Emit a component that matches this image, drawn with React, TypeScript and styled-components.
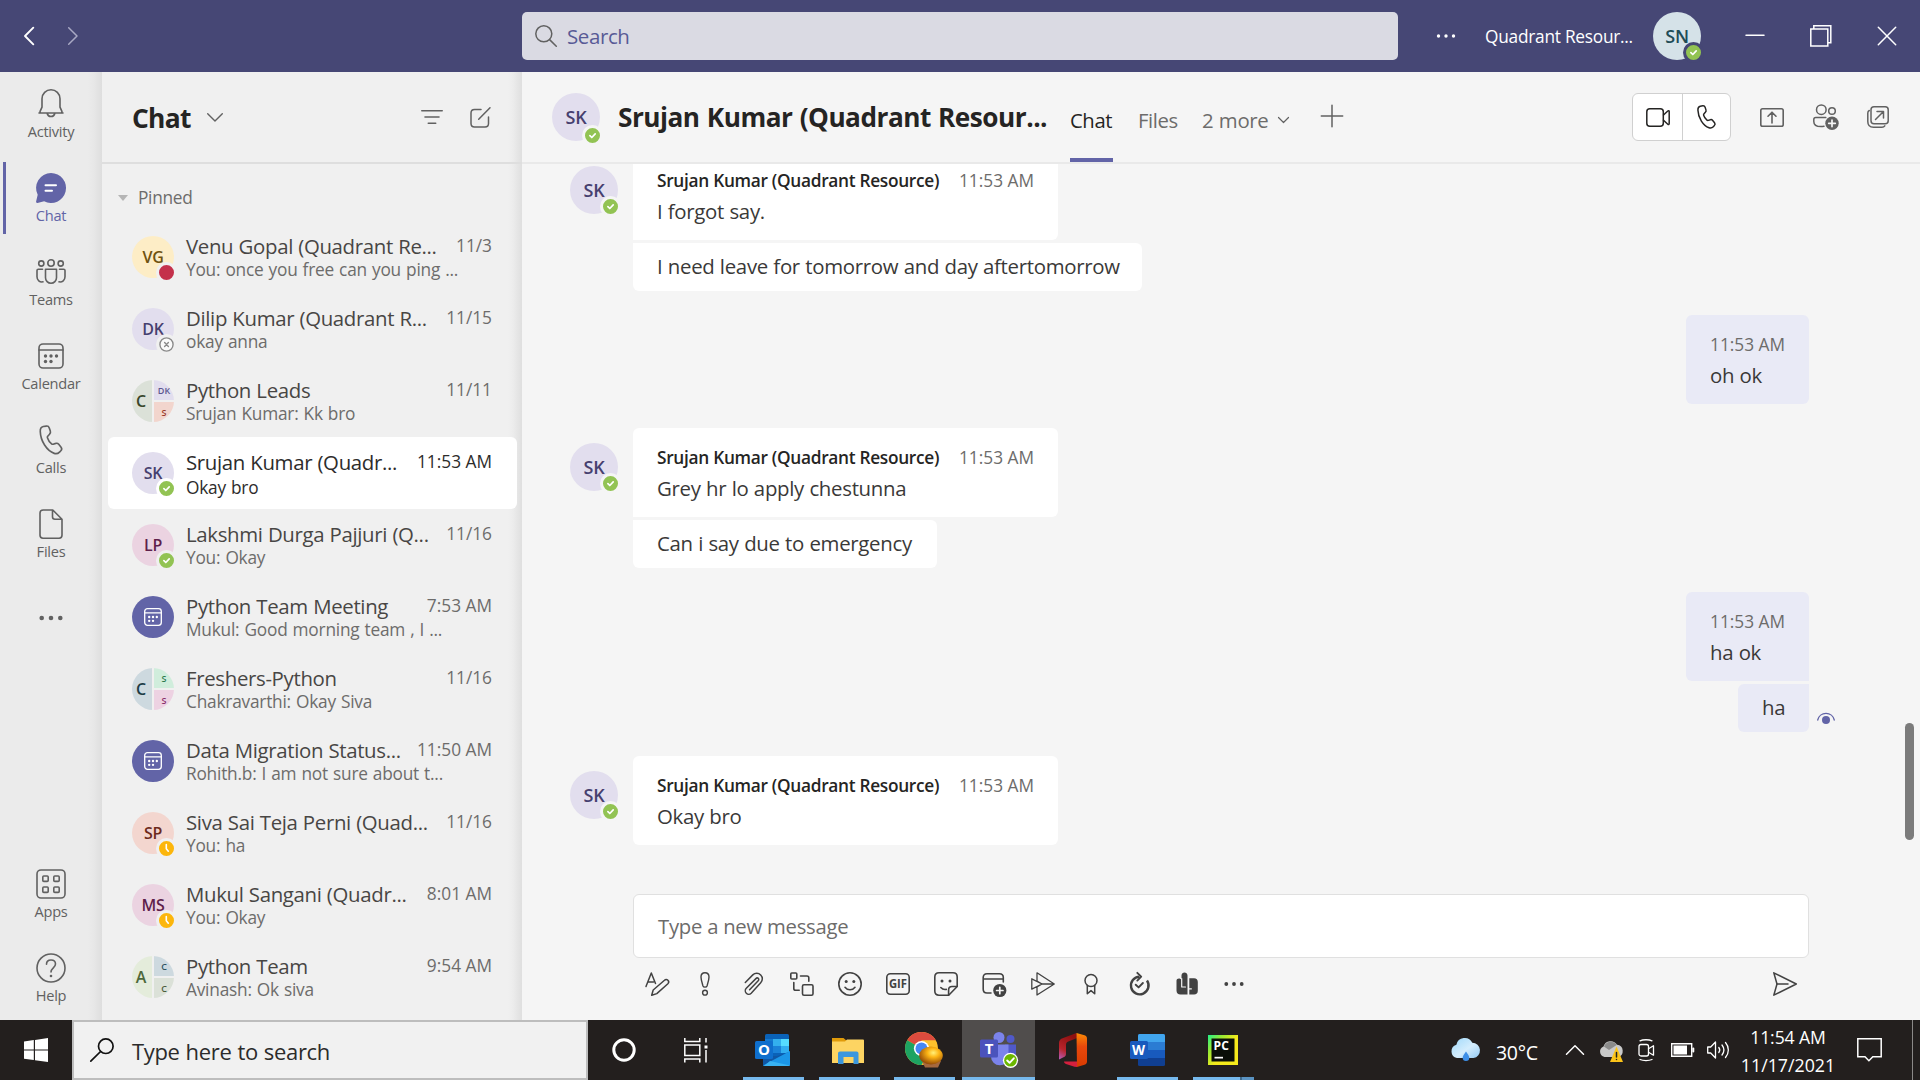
import React from "react";
import styled, { createGlobalStyle, css } from "styled-components";

const GlobalStyle = createGlobalStyle`
  *, *::before, *::after { box-sizing: border-box; }
  html, body { margin: 0; padding: 0; overflow: hidden; }
  body { font-family: "Open Sans", "Noto Sans", sans-serif; color: #252423; }
  svg { display: block; flex: none; overflow: visible; }
`;

const Screen = styled.div`
  width: 1920px;
  height: 1080px;
  display: grid;
  grid-template-rows: 72px 948px 60px;
  overflow: hidden;
`;

/* ---------- shared ---------- */

const Svg = styled.svg<{ $color?: string; $stroke?: number }>`
  fill: none;
  stroke: ${(p) => p.$color ?? "#616161"};
  stroke-width: ${(p) => p.$stroke ?? 1.6};
  stroke-linecap: round;
  stroke-linejoin: round;
`;

type IconProps = { w: number; h: number; color?: string; stroke?: number; children: React.ReactNode };
const Icon = ({ w, h, color, stroke, children }: IconProps) => (
  <Svg width={w} height={h} viewBox={`0 0 ${w} ${h}`} $color={color} $stroke={stroke}>
    {children}
  </Svg>
);

const Label = styled.span<{
  $size: number;
  $color?: string;
  $weight?: number;
  $track?: number;
  $word?: number;
  $line?: number;
}>`
  font-size: ${(p) => p.$size}px;
  line-height: ${(p) => p.$line ?? 26}px;
  color: ${(p) => p.$color ?? "#252423"};
  font-weight: ${(p) => p.$weight ?? 400};
  letter-spacing: ${(p) => p.$track ?? -0.4}px;
  word-spacing: ${(p) => p.$word ?? 0}px;
  white-space: pre;
`;

const AvatarDisc = styled.div<{ $size: number; $bg: string; $fg: string }>`
  position: relative;
  flex: none;
  width: ${(p) => p.$size}px;
  height: ${(p) => p.$size}px;
  border-radius: 50%;
  background: ${(p) => p.$bg};
  color: ${(p) => p.$fg};
  display: flex;
  align-items: center;
  justify-content: center;
  font-weight: 600;
  letter-spacing: -0.2px;
  font-size: ${(p) => (p.$size > 44 ? 18 : 16)}px;
`;

const BadgeDot = styled.span<{ $ring: string; $fill: string; $drop: number }>`
  position: absolute;
  right: -3px;
  bottom: ${(p) => -3 - p.$drop}px;
  width: 21px;
  height: 21px;
  border-radius: 50%;
  border: 3px solid ${(p) => p.$ring};
  background: ${(p) => p.$fill};
`;

type Status = "online" | "busy" | "offline" | "away";
const statusFill: Record<Status, string> = {
  online: "#92c353",
  busy: "#c4314b",
  offline: "#fafafa",
  away: "#fcb60c",
};

const Badge = ({ status, ring, drop = 0 }: { status: Status; ring: string; drop?: number }) => (
  <BadgeDot $ring={ring} $fill={statusFill[status]} $drop={drop}>
    {status === "online" && (
      <Icon w={15} h={15} color="#fff" stroke={1.7}>
        <path d="M4.9 7.7l1.9 1.8 3.4-3.6" />
      </Icon>
    )}
    {status === "offline" && (
      <Icon w={15} h={15} color="#8a8a8a" stroke={1.4}>
        <circle cx="7.5" cy="7.5" r="6.6" />
        <path d="M5.6 5.6l3.8 3.8M9.4 5.6L5.6 9.4" />
      </Icon>
    )}
    {status === "away" && (
      <Icon w={15} h={15} color="#fff" stroke={1.6}>
        <path d="M7.3 3.6v4.2l2 2.4" />
      </Icon>
    )}
  </BadgeDot>
);

/* ---------- title bar ---------- */

const TitleBar = styled.header`
  background: #464775;
  display: flex;
  align-items: center;
`;
const NavArrows = styled.div`
  width: 522px;
  padding-left: 24px;
  display: flex;
  gap: 34px;
`;
const SearchField = styled.div`
  width: 876px;
  height: 48px;
  border-radius: 5px;
  background: #dadae3;
  display: flex;
  align-items: center;
  padding: 0 0 1px 13px;
  gap: 10px;
`;
const TitleRight = styled.div`
  flex: 1;
  display: flex;
  align-items: center;
  padding-left: 38px;
`;
const OrgName = styled.div`
  margin-left: 29px;
  width: 168px;
  padding-top: 2px;
`;
const WindowButtons = styled.div`
  display: flex;
  align-items: center;
  gap: 46px;
  margin-left: 45px;
`;

/* ---------- app body ---------- */

const Body = styled.div`
  display: grid;
  grid-template-columns: 102px 420px 1398px;
  min-height: 0;
`;

const Rail = styled.nav`
  background: linear-gradient(to right, #ebebeb 88px, #e7e7e7 94px, #dedede 102px);
  display: flex;
  flex-direction: column;
`;
const RailItem = styled.div<{ $active?: boolean }>`
  height: 84px;
  display: flex;
  flex-direction: column;
  align-items: center;
  padding-top: 16px;
  ${(p) =>
    p.$active &&
    css`
      background: linear-gradient(#6264a7, #6264a7) 3px 6px / 3px 72px no-repeat;
    `}
`;
const RailMore = styled(RailItem)`
  padding-top: 0;
  justify-content: center;
`;
const RailIcon = styled.div`
  height: 32px;
  display: flex;
  align-items: center;
`;
const RailSpacer = styled.div`
  flex: 1;
`;

const ListPanel = styled.aside`
  background: linear-gradient(to right, #f0f0f0 406px, #ececec 411px, #dfdfdf 420px);
  min-width: 0;
`;
const ListHeader = styled.div`
  height: 92px;
  border-bottom: 2px solid #dedede;
  display: flex;
  align-items: center;
  padding: 0 31px 0 30px;
`;
const ListTitle = styled.div`
  padding-top: 2px;
`;
const HeaderIcons = styled.div`
  margin-left: auto;
  display: flex;
  align-items: center;
  gap: 27px;
`;
const SectionTitle = styled.div`
  height: 57px;
  display: flex;
  align-items: center;
  gap: 10px;
  padding: 11px 0 0 16px;
`;
const ChatRow = styled.div<{ $selected?: boolean }>`
  height: 72px;
  margin: 0 5px 0 6px;
  padding: 0 25px 0 24px;
  border-radius: 6px;
  display: grid;
  grid-template-columns: 42px 1fr;
  column-gap: 12px;
  align-items: start;
  background: ${(p) => (p.$selected ? "#fff" : "transparent")};
  & > :first-child { margin-top: 15px; }
`;
const RowText = styled.div<{ $selected?: boolean }>`
  display: flex;
  flex-direction: column;
  padding-top: 13px;
  gap: ${(p) => (p.$selected ? 2 : 0)}px;
`;
const RowTop = styled.div`
  display: flex;
  justify-content: space-between;
  height: 25px;
`;

const Pie = styled.div`
  width: 42px;
  height: 42px;
  border-radius: 50%;
  overflow: hidden;
  display: grid;
  grid-template-columns: 20px 20px;
  grid-template-rows: 20px 20px;
  gap: 2px;
`;
const Slice = styled.div<{ $bg: string; $fg: string; $big?: boolean }>`
  grid-row: ${(p) => (p.$big ? "1 / 3" : "auto")};
  background: ${(p) => p.$bg};
  color: ${(p) => p.$fg};
  display: flex;
  align-items: center;
  justify-content: center;
  font-weight: 600;
  padding-right: ${(p) => (p.$big ? 2 : 0)}px;
  font-size: ${(p) => (p.$big ? 16 : 9)}px;
`;

/* ---------- conversation ---------- */

const Main = styled.main`
  background: #f5f5f5;
  display: flex;
  flex-direction: column;
  min-width: 0;
`;
const MainHeader = styled.div`
  height: 92px;
  flex: none;
  border-bottom: 2px solid #e9e9e9;
  display: flex;
  align-items: center;
  padding: 0 31px 0 30px;
`;
const PersonTitle = styled.div`
  width: 452px;
  margin-left: 18px;
`;
const Tabs = styled.div`
  align-self: stretch;
  display: flex;
`;
const Tab = styled.div<{ $active?: boolean; $width: number }>`
  width: ${(p) => p.$width}px;
  margin-right: 25px;
  padding-top: 35px;
  display: flex;
  white-space: nowrap;
  border-bottom: 4px solid ${(p) => (p.$active ? "#6264a7" : "transparent")};
`;
const TabChevron = styled.div`
  padding: 10px 0 0 10px;
`;
const AddTab = styled.div`
  padding-top: 33px;
`;
const CallGroup = styled.div`
  margin-left: auto;
  width: 99px;
  height: 48px;
  border: 1px solid #d0d0d0;
  border-radius: 6px;
  background: #fff;
  display: grid;
  grid-template-columns: 50px 47px;
  & > * { display: flex; align-items: center; justify-content: center; }
  & > :first-child { border-right: 1px solid #d0d0d0; }
`;
const MainTools = styled.div`
  display: flex;
  align-items: center;
  gap: 28.5px;
  margin-left: 29px;
`;

const MessageArea = styled.div`
  height: 730px;
  flex: none;
  overflow: hidden;
  display: grid;
  grid-template-columns: 1fr 15px;
`;
const MessageList = styled.div`
  display: flex;
  flex-direction: column;
  justify-content: flex-end;
  gap: 24px;
  padding: 0 71px 49px 48px;
  height: 730px;
`;
const Scrollbar = styled.div`
  margin-top: 559px;
  width: 9px;
  height: 117px;
  border-radius: 5px;
  background: #7b7b7b;
`;
const TheirGroup = styled.div`
  display: flex;
  gap: 15px;
  & > :first-child { margin-top: 15px; }
`;
const MyGroup = styled.div`
  display: flex;
  justify-content: flex-end;
  align-items: flex-end;
  margin-right: 25px;
  gap: 8px;
`;
const Stack = styled.div<{ $mine?: boolean }>`
  display: flex;
  flex-direction: column;
  gap: 3px;
  align-items: ${(p) => (p.$mine ? "flex-end" : "flex-start")};
  & > * { border-radius: 6px; }
  & > :not(:last-child) {
    ${(p) => (p.$mine ? "border-bottom-right-radius: 0;" : "border-bottom-left-radius: 0;")}
  }
  & > :not(:first-child) {
    ${(p) => (p.$mine ? "border-top-right-radius: 0;" : "border-top-left-radius: 0;")}
  }
`;
const Bubble = styled.div<{ $mine?: boolean; $width: number; $short?: boolean }>`
  width: ${(p) => p.$width}px;
  height: ${(p) => (p.$short ? 48 : 89)}px;
  padding: ${(p) => (p.$short ? "10px 24px 0" : "17px 24px 0")};
  background: ${(p) => (p.$mine ? "#e9eaf6" : "#fff")};
  display: flex;
  flex-direction: column;
  gap: 4px;
`;
const Meta = styled.div`
  display: flex;
  justify-content: space-between;
`;
const Seen = styled.div`
  width: 18px;
  margin: 0 -26px 8px 0;
`;

const Compose = styled.div`
  margin: 0 111px 0 111px;
  height: 64px;
  border: 1px solid #e0e0e0;
  border-radius: 6px;
  background: #fff;
  display: flex;
  align-items: center;
  padding-left: 24px;
`;
const ComposeTools = styled.div`
  display: flex;
  margin: 2px 111px 0 111px;
  height: 48px;
`;
const ToolCell = styled.div`
  width: 48.2px;
  height: 48px;
  display: flex;
  align-items: center;
  justify-content: center;
  &:nth-last-child(2) { padding-right: 3px; }
  &:last-child { margin-left: auto; }
`;

/* ---------- taskbar ---------- */

const Taskbar = styled.footer`
  background: #231f1e;
  display: flex;
`;
const StartCell = styled.div`
  width: 72px;
  display: flex;
  align-items: center;
  justify-content: center;
`;
const TaskSearch = styled.div`
  width: 516px;
  border: 2px solid #bdbdbd;
  background: #f1f1f1;
  display: flex;
  align-items: center;
  gap: 18px;
  padding-left: 16px;
`;
const SearchPrompt = styled.div`
  padding-top: 2px;
`;
const TaskCell = styled.div<{ $width: number; $line?: boolean; $active?: boolean; $inset?: number }>`
  width: ${(p) => p.$width}px;
  padding-right: ${(p) => p.$inset ?? 0}px;
  display: flex;
  align-items: center;
  justify-content: center;
  background-color: ${(p) => (p.$active ? "#504d4c" : "transparent")};
  ${(p) =>
    p.$line &&
    css`
      background-image: linear-gradient(#76b9ed, #76b9ed);
      background-size: ${p.$active ? "100%" : "61px"} 3px;
      background-position: center bottom;
      background-repeat: no-repeat;
    `}
`;
const StackedCell = styled(TaskCell)`
  background-image: linear-gradient(to right, #76b9ed 47px, #3f6a8d 47px, #3f6a8d 49px, #5a93c2 49px);
  background-size: 61px 3px;
  background-position: 8px bottom;
  background-repeat: no-repeat;
`;
const Tray = styled.div`
  margin-left: auto;
  display: flex;
  align-items: center;
`;
const TraySlot = styled.div<{ $gap: number }>`
  margin-left: ${(p) => p.$gap}px;
`;
const Temp = styled.div`
  width: 44px;
  margin-left: 15px;
  padding-top: 5px;
`;
const Clock = styled.div`
  margin-left: 9px;
  width: 98px;
  display: flex;
  flex-direction: column;
  align-items: center;
  padding-top: 1px;
`;
const PeekLine = styled.div`
  width: 1px;
  height: 60px;
  background: #8b8988;
  margin: 0 7px 0 30px;
`;

/* ---------- drawings ---------- */

const Phone = ({ w, h, color, stroke }: { w: number; h: number; color: string; stroke: number }) => (
  <Svg width={w} height={h} viewBox="0 0 24 31" $color={color} $stroke={stroke}>
    <path d="M4 1.6L7.2 1.1c1.5-.2 2.5.5 3 1.9l1.1 3.3c.4 1.2.1 2.3-.8 3.2L8.6 11.6c-.4.5-.5 1-.3 1.6.8 2.6 2.3 4.7 4.3 6.3.5.4 1.1.5 1.7.3l2.6-.8c1.2-.4 2.3 0 3.1 1l2.4 3c.9 1.2.9 2.5-.2 3.6l-1.4 1.4c-1.500 1.500-3.500 2-5.500 1.300C7.700 26.700 1.200 16.600.9 6.600.8 4.100 1.800 2.100 4 1.600z" />
  </Svg>
);

const CalendarGlyph = ({ size, color, stroke }: { size: number; color: string; stroke: number }) => (
  <Svg width={size} height={size} viewBox="0 0 26 26" $color={color} $stroke={stroke}>
    <rect x="1" y="1" width="24" height="24" rx="4" />
    <path d="M1 7h24" />
    <g fill={color} stroke="none">
      <circle cx="7.5" cy="13" r="1.7" /><circle cx="13" cy="13" r="1.7" /><circle cx="18.5" cy="13" r="1.7" />
      <circle cx="7.5" cy="18.5" r="1.7" /><circle cx="13" cy="18.5" r="1.7" />
    </g>
  </Svg>
);

const Dots = ({ w, color, r, step }: { w: number; color: string; r: number; step: number }) => (
  <Icon w={w} h={8} color="none">
    <g fill={color} stroke="none">
      <circle cx={w / 2 - step} cy="4" r={r} /><circle cx={w / 2} cy="4" r={r} /><circle cx={w / 2 + step} cy="4" r={r} />
    </g>
  </Icon>
);

const railTop = [
  {
    label: "Activity",
    icon: (
      <Icon w={26} h={30}>
        <path d="M1 24h24M2.8 24c-.8-.3-1-1-.6-1.9L4 18.2V9.8a9 9 0 0 1 18 0v8.4l1.8 3.9c.4.9.2 1.6-.6 1.9M9.200 24.500a3.900 3.900 0 0 0 7.600 0" />
      </Icon>
    ),
  },
  {
    label: "Chat",
    active: true,
    icon: (
      <Icon w={30} h={30} color="none">
        <path fill="#6264a7" d="M15 0a15 15 0 1 1-6.900 28.300L1.500 30c-.9.200-1.600-.5-1.400-1.400l1.600-6.800A15 15 0 0 1 15 0z" />
        <path stroke="#fff" strokeWidth="2" d="M9.500 12.200h10.500M9.500 17.800h6.500" />
      </Icon>
    ),
  },
  {
    label: "Teams",
    icon: (
      <Icon w={30} h={26}>
        <circle cx="15" cy="4" r="3.2" /><circle cx="5.3" cy="4.5" r="2.6" /><circle cx="24.7" cy="4.5" r="2.6" />
        <path d="M9.500 10.200h11v8.600a5.500 5.500 0 0 1-11 0zM6.500 10.200H2.300c-.8 0-1.300.5-1.300 1.300v6.300c0 3.300 2.700 5.700 6 5M23.500 10.200h4.200c.8 0 1.300.5 1.300 1.300v6.300c0 3.300-2.700 5.700-6 5" />
      </Icon>
    ),
  },
  { label: "Calendar", icon: <CalendarGlyph size={26} color="#616161" stroke={1.6} /> },
  { label: "Calls", icon: <Phone w={24} h={30} color="#616161" stroke={1.7} /> },
  {
    label: "Files",
    icon: (
      <Icon w={24} h={30}>
        <path d="M4.200 1h9.600L23 10.200v16.100c0 1.900-1 2.900-2.900 2.900H4c-1.900 0-3-1-3-2.900V4C1 2 2.200 1 4.200 1zM13.500 1.200v6.600c0 1.600.8 2.500 2.500 2.500h6.800" />
      </Icon>
    ),
  },
];

const railBottom = [
  {
    label: "Apps",
    icon: (
      <Icon w={30} h={30}>
        <rect x="1" y="1" width="28" height="28" rx="4" />
        <rect x="6.8" y="7" width="5.4" height="5.4" rx="1" /><rect x="17.8" y="7" width="5.4" height="5.4" rx="1" />
        <rect x="6.8" y="18" width="5.4" height="5.4" rx="1" /><rect x="17.8" y="18" width="5.4" height="5.4" rx="1" />
      </Icon>
    ),
  },
  {
    label: "Help",
    icon: (
      <Icon w={30} h={30}>
        <circle cx="15" cy="15" r="14" />
        <path d="M10.500 11.300c0-2.600 1.900-4.300 4.500-4.300s4.500 1.700 4.500 4.100c0 3.600-4.500 3.900-4.500 7.900" />
        <circle cx="15" cy="23" r="1.3" fill="#616161" stroke="none" />
      </Icon>
    ),
  },
];

type Chat = {
  name: string;
  time: string;
  preview: string;
  selected?: boolean;
  person?: { initials: string; bg: string; fg: string; status: Status };
  pie?: { t: string; bg: string; fg: string }[];
};

const chats: Chat[] = [
  { name: "Venu Gopal (Quadrant Re...", time: "11/3", preview: "You: once you free can you ping ...", person: { initials: "VG", bg: "#fdedc6", fg: "#6f5210", status: "busy" } },
  { name: "Dilip Kumar (Quadrant R...", time: "11/15", preview: "okay anna", person: { initials: "DK", bg: "#e2deee", fg: "#46406f", status: "offline" } },
  { name: "Python Leads", time: "11/11", preview: "Srujan Kumar: Kk bro", pie: [{ t: "C", bg: "#dbe1d8", fg: "#39472c" }, { t: "DK", bg: "#e2deee", fg: "#5d5690" }, { t: "S", bg: "#f2d5cd", fg: "#9a3a2a" }] },
  { name: "Srujan Kumar (Quadr...", time: "11:53 AM", preview: "Okay bro", selected: true, person: { initials: "SK", bg: "#e2deee", fg: "#46406f", status: "online" } },
  { name: "Lakshmi Durga Pajjuri (Q...", time: "11/16", preview: "You: Okay", person: { initials: "LP", bg: "#ebd3e1", fg: "#5f1f4b", status: "online" } },
  { name: "Python Team Meeting", time: "7:53 AM", preview: "Mukul: Good morning team , I ..." },
  { name: "Freshers-Python", time: "11/16", preview: "Chakravarthi: Okay Siva", pie: [{ t: "C", bg: "#cdd9df", fg: "#1d3c46" }, { t: "S", bg: "#d0eddc", fg: "#2c7a4e" }, { t: "S", bg: "#edd2e2", fg: "#8a2f6c" }] },
  { name: "Data Migration Status...", time: "11:50 AM", preview: "Rohith.b: I am not sure about t..." },
  { name: "Siva Sai Teja Perni (Quad...", time: "11/16", preview: "You: ha", person: { initials: "SP", bg: "#f3d6cf", fg: "#6d2a1c", status: "away" } },
  { name: "Mukul Sangani (Quadr...", time: "8:01 AM", preview: "You: Okay", person: { initials: "MS", bg: "#ebd3e1", fg: "#5f1f4b", status: "away" } },
  { name: "Python Team", time: "9:54 AM", preview: "Avinash: Ok siva", pie: [{ t: "A", bg: "#e4ecdb", fg: "#4d683a" }, { t: "C", bg: "#cdd9df", fg: "#2f5361" }, { t: "C", bg: "#dbe1d8", fg: "#4b5c3c" }] },
];

const ChatAvatar = ({ chat }: { chat: Chat }) => {
  if (chat.pie) {
    return (
      <Pie>
        {chat.pie.map((s, i) => (
          <Slice key={i} $bg={s.bg} $fg={s.fg} $big={i === 0}>{s.t}</Slice>
        ))}
      </Pie>
    );
  }
  if (chat.person) {
    const p = chat.person;
    return (
      <AvatarDisc $size={42} $bg={p.bg} $fg={p.fg}>
        {p.initials}
        <Badge status={p.status} ring={chat.selected ? "#fff" : "#f0f0f0"} drop={2} />
      </AvatarDisc>
    );
  }
  return (
    <AvatarDisc $size={42} $bg="#6264a7" $fg="#fff">
      <CalendarGlyph size={18} color="#fff" stroke={1.9} />
    </AvatarDisc>
  );
};

const Time = ({ children, color = "#6d6c6b" }: { children: string; color?: string }) => (
  <Label $size={17.3} $color={color} $track={0}>{children}</Label>
);
const Sender = () => (
  <Meta>
    <Label $size={17.3} $weight={600} $track={-0.3}>Srujan Kumar (Quadrant Resource)</Label>
    <Time>11:53 AM</Time>
  </Meta>
);
const Said = ({ children }: { children: string }) => (
  <Label $size={20.4} $color="#3a3938" $track={-0.3} $word={0.4}>{children}</Label>
);
const SkAvatar = ({ drop }: { drop?: number }) => (
  <AvatarDisc $size={48} $bg="#e2deee" $fg="#46406f">
    SK
    <Badge status="online" ring="#f5f5f5" drop={drop} />
  </AvatarDisc>
);

const GifText = styled.text`
  font-family: "Open Sans", sans-serif;
  font-size: 11.5px;
  font-weight: 700;
  fill: #424242;
  stroke: none;
`;
const LogoText = styled.text<{ $size: number }>`
  font-family: "Open Sans", sans-serif;
  font-size: ${(p) => p.$size}px;
  font-weight: 700;
  fill: #fff;
  stroke: none;
`;

const D = "#424242";
const composeIcons: React.ReactNode[] = [
  <Icon w={24} h={24} color={D} stroke={1.5}>
    <path d="M1 14.500L6.300 1l4.200 10.500M3 10h5.500" />
    <path d="M6.700 23.300l1.500-5.300L19.500 8.300a2.400 2.400 0 0 1 3.400 3.400L11.800 21.600z" />
  </Icon>,
  <Icon w={10} h={24} color={D} stroke={1.4}>
    <path d="M5 .7c2.600 0 4 1.700 4 4.200 0 3-1.200 6.400-2 9.100-.5 1.500-3.500 1.500-4 0C2.200 11.300 1 7.900 1 4.900 1 2.400 2.400.7 5 .7z" />
    <circle cx="5" cy="20.700" r="2.400" />
  </Icon>,
  <Icon w={20} h={24} color={D} stroke={1.5}>
    <path d="M2.300 10.500l7.500-7.600a5.500 5.500 0 0 1 7.900 0 5.600 5.600 0 0 1 0 7.900l-9.500 10.400a3.400 3.400 0 0 1-4.900-4.900l9.600-9.700c1.700-1.700 3.900.4 2.300 2.100l-8.600 9" />
  </Icon>,
  <Icon w={24} h={24} color={D} stroke={1.6}>
    <rect x=".8" y="1" width="6" height="6" rx="1" />
    <rect x="12.500" y="12.800" width="10.500" height="10.500" rx="1.500" />
    <path d="M10.500 4h6.500c1.200 0 1.800.6 1.800 1.800v3.500M3.800 10.500v6c0 1.200.6 1.800 1.800 1.800h3.600" />
  </Icon>,
  <Icon w={24} h={24} color={D} stroke={1.6}>
    <circle cx="12" cy="12" r="11.200" />
    <path d="M7 15.300c1.200 1.600 3 2.500 5 2.500s3.800-.9 5-2.500" />
    <g fill={D} stroke="none"><circle cx="8.200" cy="9.500" r="1.500" /><circle cx="15.800" cy="9.500" r="1.500" /></g>
  </Icon>,
  <Icon w={24} h={22} color={D} stroke={1.6}>
    <rect x=".8" y=".8" width="22.400" height="20.400" rx="3.500" />
    <GifText x="3" y="15" textLength="18" lengthAdjust="spacingAndGlyphs">GIF</GifText>
  </Icon>,
  <Icon w={24} h={24} color={D} stroke={1.6}>
    <path d="M5 .8h14c2.800 0 4.200 1.400 4.200 4.200v9.500l-8.500 8.700H5c-2.800 0-4.200-1.400-4.200-4.200V5C.8 2.200 2.200.8 5 .8z" />
    <path d="M23 14.500h-5c-2.200 0-3.400 1.100-3.400 3.400v5M6.800 15.500c1.500 1.700 3.500 2.300 5.500 1.900" />
    <g fill={D} stroke="none"><circle cx="8" cy="9" r="1.500" /><circle cx="16" cy="9" r="1.500" /></g>
  </Icon>,
  <Icon w={24} h={24} color={D} stroke={1.6}>
    <path d="M9 21H5c-2.500 0-3.800-1.300-3.800-3.800V5.500C1.200 3 2.500 1.800 5 1.800h12.500c2.500 0 3.800 1.200 3.800 3.700V10M1.200 7h20" />
    <circle cx="17.800" cy="18.500" r="6.600" fill={D} stroke="none" />
    <path stroke="#f5f5f5" strokeWidth="1.700" d="M17.800 15.300v6.400M14.600 18.500H21" />
  </Icon>,
  <Icon w={24} h={24} color={D} stroke={1.3}>
    <path d="M6 .8L23.300 12 6 23V15L11 12 6 9zM.8 6.800v10.400L11 12zM11 12h12" />
  </Icon>,
  <Icon w={14} h={22} color={D} stroke={1.5}>
    <circle cx="7" cy="7.500" r="6" />
    <path d="M3.300 12.500v8.200L7 17.600l3.700 3.100v-8.200" />
  </Icon>,
  <Icon w={20} h={24} color={D} stroke={2.4}>
    <path d="M18 8.500A8.800 8.800 0 1 1 10.500 4.700" strokeLinecap="butt" />
    <path d="M8.300.8l3.900 3.900-3.900 3.900M6.700 12.700l2.900 2.700 4.300-4.400" strokeWidth="1.900" />
  </Icon>,
  <Icon w={22} h={24} color="none">
    <g fill={D}>
      <path d="M5.500 3.500C5.500-.4 11.500-.4 11.500 3.500V22.500H4.500C2 22.500.5 21 .5 18.500V8.500c0-2.500 4-2.800 5-.5z" />
      <path d="M13.300 6.300h4.700c2.500 0 3.800 1.300 3.800 3.800v8.600c0 2.500-1.300 3.800-3.800 3.800h-4.700V17.500h2.500v-1.300h-2.500z" />
    </g>
    <path stroke="#f5f5f5" strokeWidth="1.200" d="M5.700 6.500v8.500h3.800" />
  </Icon>,
  <Dots w={24} color={D} r={1.9} step={7.7} />,
];

const OutlookLogo = () => (
  <Icon w={35} h={32} color="none">
    <rect x="10" y="0" width="24" height="22" rx="1.500" fill="#0a62b8" />
    <rect x="10" y="5" width="8" height="8" fill="#1479d0" />
    <rect x="18" y="5" width="8" height="7" fill="#33b0ee" />
    <rect x="26" y="5" width="8" height="7" fill="#55dcff" />
    <rect x="18" y="12" width="8" height="7" fill="#1a82d8" />
    <rect x="26" y="12" width="8" height="7" fill="#31aef0" />
    <path d="M34 18l1-1v13.500a1.500 1.500 0 0 1-1.500 1.500H9.500A1.500 1.500 0 0 1 8 30.500V22h14z" fill="#0f57a5" />
    <path d="M35 17L8 31.500c.3.400 1 .5 1.500.5h24a1.500 1.500 0 0 0 1.500-1.500z" fill="#1b96e8" />
    <path d="M15 27l20 4.500-1.500.5H9z" fill="#38b2f2" />
    <rect x="0" y="7" width="18" height="18" rx="1.500" fill="#0f6fcd" />
    <LogoText $size={15} x="3" y="21.400">O</LogoText>
  </Icon>
);
const ExplorerLogo = () => (
  <Icon w={32} h={27} color="none">
    <path d="M0 1h11.500l4 3.500V9H0z" fill="#e09b0a" />
    <path d="M0 4.500h13l2-2h16a1 1 0 0 1 1 1V26H0z" fill="#fdd462" />
    <path d="M6 27V16.500c0-1.200.8-2 2-2h16.500c1.200 0 2 .8 2 2V27h-5v-7h-10v7z" fill="#3b97de" />
  </Icon>
);
const ChromeLogo = () => (
  <Icon w={38} h={36} color="none">
    <defs>
      <radialGradient id="gold" cx=".6" cy=".35" r=".7">
        <stop offset="0" stopColor="#fff07a" /><stop offset=".35" stopColor="#fdb515" /><stop offset="1" stopColor="#8a3f05" />
      </radialGradient>
    </defs>
    <circle cx="16.500" cy="16.500" r="16.500" fill="#fdc12c" />
    <path d="M16.500 16.500L2.200 8.300A16.500 16.500 0 0 1 30.800 8.300H16.500z" fill="#dc4b3e" />
    <path d="M16.500 16.500L2.200 8.300A16.500 16.500 0 0 0 16.500 33l7-12.500z" fill="#1da362" />
    <circle cx="16.500" cy="16.500" r="7.600" fill="#fff" /><circle cx="16.500" cy="16.500" r="6" fill="#4587f3" />
    <path d="M17 29h19l-3 6.500H20z" fill="#a5683e" />
    <ellipse cx="26" cy="23.500" rx="11.800" ry="9" fill="url(#gold)" />
  </Icon>
);
const TeamsLogo = () => (
  <Icon w={38} h={36} color="none">
    <circle cx="19" cy="5.500" r="5.500" fill="#7b83eb" /><circle cx="30.500" cy="7" r="4" fill="#5059c9" />
    <path d="M25 12.500h11v9a6.500 6.500 0 0 1-11 4.500z" fill="#5059c9" />
    <path d="M11 12.500h17.500v12a8.700 8.700 0 0 1-17.500 0z" fill="#7b83eb" />
    <rect x="0" y="7.500" width="18" height="18" rx="1.500" fill="#4b53bc" />
    <LogoText $size={15} x="4.800" y="22">T</LogoText>
    <circle cx="30.500" cy="28.300" r="7.600" fill="#fff" /><circle cx="30.500" cy="28.300" r="6.300" fill="#6bb700" />
    <path stroke="#fff" strokeWidth="1.900" d="M27.200 28.500l2.400 2.300 4.200-4.500" />
  </Icon>
);
const OfficeLogo = () => (
  <Icon w={28} h={34} color="none">
    <defs>
      <linearGradient id="officeL" x1="0" y1="1" x2=".4" y2="0">
        <stop offset="0" stopColor="#b660c0" /><stop offset=".4" stopColor="#b8242c" /><stop offset="1" stopColor="#8e1010" />
      </linearGradient>
      <linearGradient id="officeR" x1="0" y1="0" x2="0" y2="1">
        <stop offset="0" stopColor="#fb8b05" /><stop offset=".4" stopColor="#e8480c" /><stop offset="1" stopColor="#d83b01" />
      </linearGradient>
    </defs>
    <path d="M17.500 0L3.500 5.200C1 6.200 0 7.700 0 10v16.500l4.500-2.200c1.700-.8 2.500-1.800 2.500-3.600V12c0-1.800.7-2.700 2.300-3.400L18 5z" fill="url(#officeL)" />
    <path d="M17.500 0l8 2.200C27.200 2.800 28 3.800 28 5.500v23c0 1.600-.8 2.600-2.500 3.200L18 34z" fill="url(#officeR)" />
    <path d="M5 28.500h13V34l-2.500-.2L7 31c-1.200-.5-2-1.300-2-2.500z" fill="#d5203e" />
  </Icon>
);
const WordLogo = () => (
  <Icon w={35} h={32} color="none">
    <rect x="8" y="0" width="27" height="32" rx="1.500" fill="#103f91" />
    <path d="M8 16h27v8H8z" fill="#185abd" /><path d="M8 8h27v8H8z" fill="#2b7cd3" />
    <path d="M9.500 0h24A1.500 1.500 0 0 1 35 1.500V8H8V1.500A1.500 1.500 0 0 1 9.500 0z" fill="#41a5ee" />
    <rect x="0" y="7" width="18" height="18" rx="1.500" fill="#185abd" />
    <LogoText $size={13.5} x="1.900" y="20.800">W</LogoText>
  </Icon>
);
const PyCharmLogo = () => (
  <Icon w={30} h={30} color="none">
    <defs>
      <linearGradient id="pc" x1="0" y1="0" x2=".6" y2=".5">
        <stop offset="0" stopColor="#21f08a" /><stop offset=".5" stopColor="#9be932" /><stop offset="1" stopColor="#f5ea1c" />
      </linearGradient>
    </defs>
    <rect width="30" height="30" fill="url(#pc)" /><rect x="3.500" y="3.500" width="23" height="23" fill="#0a0f08" />
    <LogoText $size={12} x="5.600" y="15.200">PC</LogoText>
    <rect x="6.500" y="21.800" width="8.500" height="1.700" fill="#fff" />
  </Icon>
);
const CloudWeather = () => (
  <Icon w={31} h={24} color="none">
    <defs>
      <linearGradient id="cw" x1="0" y1="0" x2="1" y2="1">
        <stop offset="0" stopColor="#9fd8fa" /><stop offset=".55" stopColor="#d4edfd" /><stop offset="1" stopColor="#94cbf5" />
      </linearGradient>
    </defs>
    <path d="M7 20a6.800 6.800 0 0 1-.6-13.200A8.500 8.500 0 0 1 22.300 4.700 7.700 7.700 0 0 1 23.500 20z" fill="url(#cw)" />
    <path d="M16 13.500c2 2.800 3.300 4.700 3.300 6.300a3.300 3.300 0 0 1-6.600 0c0-1.600 1.300-3.500 3.300-6.300z" fill="#3d8fe8" />
  </Icon>
);

const App = () => (
  <>
    <GlobalStyle />
    <Screen>
      <TitleBar>
        <NavArrows>
          <Icon w={10} h={18} color="#fff" stroke={1.9}><path d="M9.300.7L1 9l8.300 8.300" /></Icon>
          <Icon w={10} h={18} color="#a9a9c4" stroke={1.5}><path d="M.7.7L9 9 .7 17.300" /></Icon>
        </NavArrows>
        <SearchField>
          <Icon w={22} h={22} color="#616161" stroke={1.5}>
            <circle cx="8.800" cy="8.800" r="8" /><path d="M14.600 14.600l6.700 6.700" />
          </Icon>
          <Label $size={20.5} $color="#585a96" $track={-0.4}>Search</Label>
        </SearchField>
        <TitleRight>
          <Dots w={20} color="#fff" r={1.7} step={7.5} />
          <OrgName><Label $size={17.3} $color="#fff" $track={-0.25}>Quadrant Resour...</Label></OrgName>
          <AvatarDisc $size={48} $bg="#d5e2e8" $fg="#204c56">
            SN
            <Badge status="online" ring="#464775" />
          </AvatarDisc>
          <WindowButtons>
            <Icon w={18} h={2} color="#fff" stroke={1.5}><path d="M0 .3h18" /></Icon>
            <Icon w={22} h={22} color="#fff" stroke={1.5}>
              <path strokeLinejoin="miter" d="M.8 4h17v17H.8zM3.800 4V.8h17v17h-3" />
            </Icon>
            <Icon w={18} h={18} color="#fff" stroke={1.5}><path d="M.3.3l17.400 17.400M17.700.3L.3 17.700" /></Icon>
          </WindowButtons>
        </TitleRight>
      </TitleBar>

      <Body>
        <Rail>
          {railTop.map((r) => (
            <RailItem key={r.label} $active={r.active}>
              <RailIcon>{r.icon}</RailIcon>
              <Label $size={14.6} $color={r.active ? "#6264a7" : "#616161"} $track={-0.25} $line={22}>{r.label}</Label>
            </RailItem>
          ))}
          <RailMore>
            <Dots w={26} color="#616161" r={2.3} step={9.3} />
          </RailMore>
          <RailSpacer />
          {railBottom.map((r) => (
            <RailItem key={r.label}>
              <RailIcon>{r.icon}</RailIcon>
              <Label $size={14.6} $color="#616161" $track={-0.25} $line={22}>{r.label}</Label>
            </RailItem>
          ))}
        </Rail>

        <ListPanel>
          <ListHeader>
            <ListTitle><Label $size={26.4} $weight={700} $track={-0.7} $line={34}>Chat</Label></ListTitle>
            <TraySlot $gap={16}>
              <Icon w={16} h={9} stroke={1.4}><path d="M.7.7L8 8l7.300-7.300" /></Icon>
            </TraySlot>
            <HeaderIcons>
              <Icon w={22} h={14} stroke={1.6}><path d="M.8.8h20.400M4 7h14M7.300 13.200h7.400" /></Icon>
              <Icon w={21} h={21} stroke={1.5}>
                <path d="M11 2.500H4.500C2.200 2.500 1 3.700 1 6v10.500C1 18.800 2.200 20 4.500 20H15c2.300 0 3.500-1.200 3.500-3.500V10M8.700 12.300L20 .8" />
              </Icon>
            </HeaderIcons>
          </ListHeader>
          <SectionTitle>
            <Icon w={10} h={6} color="none"><path fill="#b5b5b5" d="M0 0h10L5 6z" /></Icon>
            <Label $size={17.3} $color="#6d6c6b" $track={-0.3}>Pinned</Label>
          </SectionTitle>
          {chats.map((c) => (
            <ChatRow key={c.name} $selected={c.selected}>
              <ChatAvatar chat={c} />
              <RowText $selected={c.selected}>
                <RowTop>
                  <Label $size={20.4} $line={25} $color={c.selected ? "#2d2c2b" : "#484644"} $track={-0.33} $word={0.3}>{c.name}</Label>
                  <Label $size={17.3} $line={24} $color={c.selected ? "#2d2c2b" : "#6d6c6b"} $track={0}>{c.time}</Label>
                </RowTop>
                <Label $size={17.3} $line={22} $color={c.selected ? "#2d2c2b" : "#6d6c6b"} $track={-0.22} $word={0.8}>{c.preview}</Label>
              </RowText>
            </ChatRow>
          ))}
        </ListPanel>

        <Main>
          <MainHeader>
            <SkAvatar drop={2} />
            <PersonTitle>
              <Label $size={26.2} $weight={700} $track={-0.5} $word={1} $line={34}>Srujan Kumar (Quadrant Resour...</Label>
            </PersonTitle>
            <Tabs>
              <Tab $width={43} $active><Label $size={20.3} $track={-0.4}>Chat</Label></Tab>
              <Tab $width={39}><Label $size={20.3} $color="#6d6c6b" $track={-0.4}>Files</Label></Tab>
              <Tab $width={94}>
                <Label $size={20.4} $color="#6d6c6b" $track={-0.35} $word={0.6}>2 more</Label>
                <TabChevron>
                  <Icon w={11} h={6} stroke={1.2}><path d="M.5.5l5 5 5-5" /></Icon>
                </TabChevron>
              </Tab>
              <AddTab>
                <Icon w={22} h={22} stroke={1.5}><path d="M11 .3v21.400M.3 11h21.400" /></Icon>
              </AddTab>
            </Tabs>
            <CallGroup>
              <div>
                <Icon w={24} h={19} color="#252423" stroke={1.5}>
                  <rect x=".8" y=".8" width="16.500" height="17.400" rx="3" />
                  <path d="M17.500 7l4.300-4c.7-.6 1.400-.3 1.400.6v12c0 .9-.7 1.200-1.400.6l-4.300-4" />
                </Icon>
              </div>
              <div><Phone w={19} h={24} color="#252423" stroke={1.9} /></div>
            </CallGroup>
            <MainTools>
              <Icon w={24} h={19}>
                <rect x=".8" y=".8" width="22.400" height="17.400" rx="1.800" />
                <path d="M12 15V4.500M8 8.200l4-4 4 4" />
              </Icon>
              <Icon w={26} h={26} stroke={1.5}>
                <circle cx="8.300" cy="5.700" r="4.800" /><circle cx="19" cy="7" r="3.300" />
                <path d="M11 22.300c-1 .2-2 .3-3 .3-4.300 0-7.200-1.700-7.200-5.200v-2c0-1.200.8-2 2-2h10" />
                <circle cx="19" cy="19.300" r="6.700" fill="#616161" stroke="none" />
                <path stroke="#f5f5f5" strokeWidth="1.700" d="M19 16v6.600M15.700 19.300h6.600" />
              </Icon>
              <Icon w={22} h={22} stroke={1.5}>
                <rect x="4" y=".8" width="17.200" height="17" rx="3" />
                <path d="M8.500 13.500l7.500-7.500M10 5.500h6.500V12M2.300 4.500C1.300 5 .8 6 .8 7v8.500c0 3.700 2 5.700 5.700 5.700H15c1.200 0 2.200-.5 2.800-1.400" />
              </Icon>
            </MainTools>
          </MainHeader>

          <MessageArea>
            <MessageList>
              <TheirGroup>
                <SkAvatar />
                <Stack>
                  <Bubble $width={425}><Sender /><Said>I forgot say.</Said></Bubble>
                  <Bubble $width={509} $short><Said>I need leave for tomorrow and day aftertomorrow</Said></Bubble>
                </Stack>
              </TheirGroup>
              <MyGroup>
                <Stack $mine>
                  <Bubble $mine $width={123}><Time>11:53 AM</Time><Said>oh ok</Said></Bubble>
                </Stack>
              </MyGroup>
              <TheirGroup>
                <SkAvatar />
                <Stack>
                  <Bubble $width={425}><Sender /><Said>Grey hr lo apply chestunna</Said></Bubble>
                  <Bubble $width={304} $short><Said>Can i say due to emergency</Said></Bubble>
                </Stack>
              </TheirGroup>
              <MyGroup>
                <Stack $mine>
                  <Bubble $mine $width={123}><Time>11:53 AM</Time><Said>ha ok</Said></Bubble>
                  <Bubble $mine $width={71} $short><Said>ha</Said></Bubble>
                </Stack>
                <Seen>
                  <Icon w={18} h={12} color="#6264a7" stroke={1.3}>
                    <path d="M.7 8a8.500 8.500 0 0 1 16.600 0" />
                    <circle cx="9" cy="8" r="4" fill="#6264a7" stroke="none" />
                  </Icon>
                </Seen>
              </MyGroup>
              <TheirGroup>
                <SkAvatar />
                <Stack>
                  <Bubble $width={425}><Sender /><Said>Okay bro</Said></Bubble>
                </Stack>
              </TheirGroup>
            </MessageList>
            <Scrollbar />
          </MessageArea>

          <Compose><Label $size={20.3} $color="#6d6c6b" $track={-0.25}>Type a new message</Label></Compose>
          <ComposeTools>
            {composeIcons.map((ic, i) => <ToolCell key={i}>{ic}</ToolCell>)}
            <ToolCell>
              <Icon w={24} h={24} color={D} stroke={1.5}>
                <path d="M.8.8L23.300 12 .8 23.200 4 12z" /><path d="M4 12h11" />
              </Icon>
            </ToolCell>
          </ComposeTools>
        </Main>
      </Body>

      <Taskbar>
        <StartCell>
          <Icon w={24} h={24} color="none">
            <path fill="#fff" d="M0 3.400l9.800-1.300v9.400H0zM11 1.900L24 0v11.500H11zM0 12.600h9.800V22L0 20.700zM11 12.600h13V24l-13-1.800z" />
          </Icon>
        </StartCell>
        <TaskSearch>
          <Icon w={24} h={24} color="#111" stroke={1.7}>
            <circle cx="15.800" cy="8.200" r="7.300" /><path d="M10.600 13.500L.8 23.200" />
          </Icon>
          <SearchPrompt>
            <Label $size={22} $color="#2b2b2b" $track={-0.33} $word={0.6} $line={30}>Type here to search</Label>
          </SearchPrompt>
        </TaskSearch>
        <TaskCell $width={72}>
          <Icon w={24} h={24} color="#fff" stroke={3}><circle cx="12" cy="12" r="10.200" /></Icon>
        </TaskCell>
        <TaskCell $width={75} $inset={3}>
          <Icon w={24} h={26} color="#fff" stroke={1.5}>
            <path strokeLinecap="butt" strokeLinejoin="miter" d="M.8 1v3.500h15V1M.8 8h15v10.500H.8zM.8 25.500V22h15v3.500M22 1v4.500M22 13v12.500" />
            <rect x="20.500" y="8.500" width="3" height="3" fill="#fff" stroke="none" />
          </Icon>
        </TaskCell>
        <TaskCell $width={77} $line $inset={2}><OutlookLogo /></TaskCell>
        <TaskCell $width={74} $line $inset={2}><ExplorerLogo /></TaskCell>
        <TaskCell $width={76} $line><ChromeLogo /></TaskCell>
        <TaskCell $width={73} $line $active><TeamsLogo /></TaskCell>
        <TaskCell $width={75}><OfficeLogo /></TaskCell>
        <TaskCell $width={75} $line><WordLogo /></TaskCell>
        <StackedCell $width={76}><PyCharmLogo /></StackedCell>
        <Tray>
          <CloudWeather />
          <Temp><Label $size={19.5} $color="#fff" $track={-0.3}>30°C</Label></Temp>
          <TraySlot $gap={25}>
            <Icon w={20} h={10} color="#fff" stroke={1.5}><path d="M1.500 9.200L10 .8l8.500 8.400" /></Icon>
          </TraySlot>
          <TraySlot $gap={14}>
            <Icon w={24} h={20} color="none">
              <path fill="#c9c9c9" d="M5.500 17a5.500 5.500 0 0 1-1-10.500A7.500 7.500 0 0 1 18 4.800 6.200 6.200 0 0 1 19 17z" />
              <path fill="#8b8b8b" d="M5 6.500A7.500 7.500 0 0 1 18 4.800L10 10z" />
              <path fill="#fcc419" d="M17.500 6.500L24 22H11z" />
              <path stroke="#222" strokeWidth="1.500" d="M17.500 12.500v4.500M17.500 19.400v.1" />
            </Icon>
          </TraySlot>
          <TraySlot $gap={15}>
            <Icon w={18} h={22} color="#fff" stroke={1.3}>
              <rect x="1" y="5.500" width="9.500" height="11.500" rx="2" />
              <path d="M10.500 9.800l5-3v9.400l-5-3M2 1.800c3-1.400 9-1.400 12 0M2 20.500c3 1.400 9 1.400 12 0" />
            </Icon>
          </TraySlot>
          <TraySlot $gap={15}>
            <Icon w={23} h={14} color="#fff" stroke={1.4}>
              <path strokeLinejoin="miter" d="M.7.7h20v12.600H.7z" />
              <rect x="2.500" y="2.500" width="13.500" height="9" fill="#fff" stroke="none" />
              <path strokeWidth="2" d="M22.300 5.500v3" />
            </Icon>
          </TraySlot>
          <TraySlot $gap={13}>
            <Icon w={23} h={18} color="#fff" stroke={1.3}>
              <path d="M.7 6h3L8.500 1v16l-4.800-5h-3zM11.800 6.500c1.200 1.500 1.200 3.500 0 5M15 4c2.300 3 2.300 7 0 10M18.500 1.500c3.800 4.500 3.800 10.500 0 15" />
            </Icon>
          </TraySlot>
          <Clock>
            <Label $size={17.6} $color="#fff" $track={-0.1} $line={28}>11:54 AM</Label>
            <Label $size={17.8} $color="#fff" $track={0} $line={28}>11/17/2021</Label>
          </Clock>
          <TraySlot $gap={20}>
            <Icon w={25} h={24} color="#fff" stroke={1.5}>
              <path strokeLinejoin="miter" d="M.8.8h23.400v18h-8.400l-3.900 4-3.900-4H.8z" />
            </Icon>
          </TraySlot>
          <PeekLine />
        </Tray>
      </Taskbar>
    </Screen>
  </>
);

export default App;
